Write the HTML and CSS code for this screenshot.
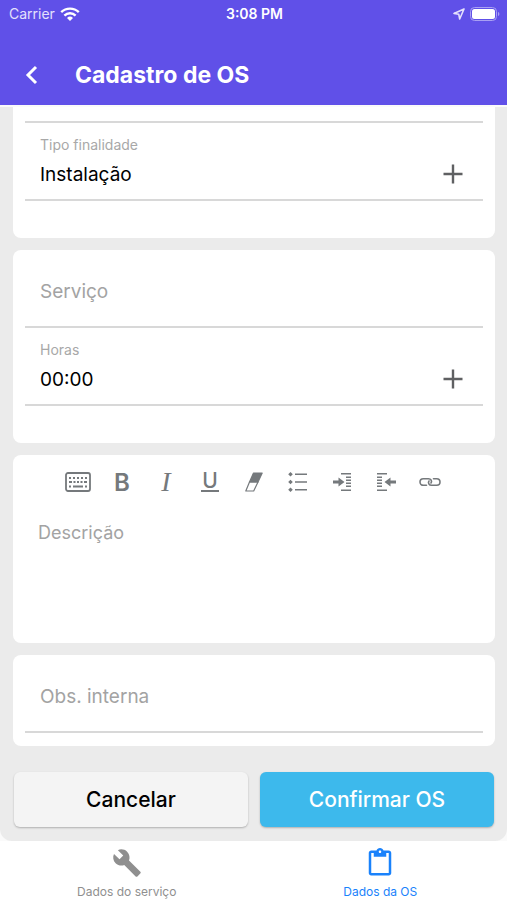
FILE: index.html
```html
<!DOCTYPE html>
<html lang="pt-BR">
<head>
  <meta charset="UTF-8" />
  <meta name="viewport" content="width=device-width, initial-scale=1" />
  <title>Cadastro de OS</title>
  <link rel="stylesheet" href="styles.css">
</head>
<body>

  <header class="header">
    <div class="status-bar">
      <div class="status-left">
        <span>Carrier</span>
        <svg width="20" height="14" viewBox="0 0 20 14" fill="none" stroke="#fff" stroke-width="2.4">
          <path d="M1.2 5.2a12.6 12.6 0 0 1 17.6 0" />
          <path d="M4.4 8.6a8 8 0 0 1 11.2 0" />
          <path d="M7 11a4.4 4.4 0 0 1 6 0l-3 3z" fill="#fff" stroke="none" />
        </svg>
      </div>
      <span class="status-time">3:08 PM</span>
      <div class="status-right">
        <svg width="12" height="12" viewBox="0 0 12 12" fill="none" stroke="#e4e0fc" stroke-width="1.6" stroke-linejoin="round">
          <path d="M11 1L1 5.4l4.8.9.9 4.7z" />
        </svg>
        <svg width="30" height="14" viewBox="0 0 30 14">
          <rect x="0.5" y="0.5" width="26" height="13" rx="4" fill="none" stroke="#a9a0f3" />
          <rect x="2" y="2" width="23" height="10" rx="2.5" fill="#fff" />
          <path d="M28 5c1.8.5 1.8 3.5 0 4z" fill="#a9a0f3" />
        </svg>
      </div>
    </div>
    <div class="title-bar">
      <button class="back-btn" type="button" aria-label="Voltar">
        <svg width="13" height="20" viewBox="0 0 13 20" fill="none" stroke="#fff" stroke-width="3">
          <path d="M11 2L3 10l8 8" />
        </svg>
      </button>
      <h1>Cadastro de OS</h1>
    </div>
  </header>

  <main class="content">
    <form class="form">
      <section class="card card-first">
        <div class="field field-cut"></div>
        <div class="field">
          <label for="tipo">Tipo finalidade</label>
          <div class="field-row">
            <input type="text" id="tipo" value="Instalação" />
            <button class="add-btn" type="button" aria-label="Selecionar finalidade">
              <svg width="20" height="20" viewBox="0 0 20 20" stroke="#5f6062" stroke-width="2.4"><path d="M10 0.5v19M0.5 10h19" /></svg>
            </button>
          </div>
        </div>
      </section>

      <section class="card">
        <div class="field field-empty">
          <input type="text" id="servico" placeholder="Serviço" aria-label="Serviço" />
        </div>
        <div class="field">
          <label for="horas">Horas</label>
          <div class="field-row">
            <input type="text" id="horas" value="00:00" />
            <button class="add-btn" type="button" aria-label="Selecionar horas">
              <svg width="20" height="20" viewBox="0 0 20 20" stroke="#5f6062" stroke-width="2.4"><path d="M10 0.5v19M0.5 10h19" /></svg>
            </button>
          </div>
        </div>
      </section>

      <section class="card card-editor">
        <div class="toolbar">
          <button type="button" aria-label="Teclado">
            <svg width="26" height="20" viewBox="0 0 26 20" fill="none" stroke="#75797c">
              <rect x="1" y="1" width="24" height="18" rx="2" stroke-width="1.8" />
              <path d="M4 6h18" stroke-width="2" stroke-dasharray="2 2" />
              <path d="M4 10h3M8.5 10h2M12 10h2M15.5 10h2M19 10h3M4 14.5h2M8 14.5h10M20 14.5h2" stroke-width="2" />
            </svg>
          </button>
          <button class="tool-bold" type="button" aria-label="Negrito">B</button>
          <button class="tool-italic" type="button" aria-label="Itálico">I</button>
          <button class="tool-underline" type="button" aria-label="Sublinhado"><span>U</span></button>
          <button type="button" aria-label="Limpar formatação">
            <svg width="18" height="20" viewBox="0 0 18 20" stroke="#75797c" stroke-width="1.2" stroke-linejoin="round">
              <path d="M8.5 1h8.7L13 10H4.5z" fill="#75797c" />
              <path d="M4.5 10H13l-4.3 9H.8z" fill="none" />
            </svg>
          </button>
          <button type="button" aria-label="Lista">
            <svg width="20" height="20" viewBox="0 0 20 20" fill="#75797c">
              <path d="M2.5 0l2.3 2.3-2.3 2.3L.2 2.3zM2.5 7.7L4.8 10l-2.3 2.3L.2 10zM2.5 15.4l2.3 2.3-2.3 2.3-2.3-2.3z" />
              <path d="M7 1.5h12v1.6H7zM7 9.2h12v1.6H7zM7 16.9h12v1.6H7z" />
            </svg>
          </button>
          <button type="button" aria-label="Aumentar recuo">
            <svg width="20" height="18" viewBox="0 0 20 18" fill="#75797c">
              <path d="M1 7.5h5.5V4.6L12.500 9l-6 4.400v-2.900H1z" />
              <path d="M9 0h10v1.500H9zM14 3.600h5V5h-5zM14 6.600h5V8h-5zM14 9.600h5V11h-5zM14 12.600h5V14h-5zM9 16.500h10V18H9z" />
            </svg>
          </button>
          <button type="button" aria-label="Diminuir recuo">
            <svg width="20" height="18" viewBox="0 0 20 18" fill="#75797c">
              <path d="M20 7.500h-5.500V4.600L8.500 9l6 4.400v-2.900H20z" />
              <path d="M1 0h10v1.500H1zM1 3.600h5V5H1zM1 6.600h5V8H1zM1 9.600h5V11H1zM1 12.600h5V14H1zM1 16.500h10V18H1z" />
            </svg>
          </button>
          <button type="button" aria-label="Link">
            <svg width="22" height="10" viewBox="0 0 22 10" fill="none" stroke="#75797c" stroke-width="1.6" stroke-linecap="round">
              <path d="M7.5 8.300H4.300a3.300 3.300 0 0 1 0-6.600h5.200c2.500 0 3.800 2.600 2.500 4.300" />
              <path d="M14.500 1.700h3.200a3.300 3.300 0 0 1 0 6.600h-5.200C10 8.300 8.700 5.700 10 4" />
            </svg>
          </button>
        </div>
        <textarea id="descricao" placeholder="Descrição" aria-label="Descrição"></textarea>
      </section>

      <section class="card card-last">
        <div class="field field-empty">
          <input type="text" id="obs" placeholder="Obs. interna" aria-label="Obs. interna" />
        </div>
      </section>

      <div class="actions">
        <button class="cancel-btn" type="button">Cancelar</button>
        <button class="confirm-btn" type="button">Confirmar OS</button>
      </div>
    </form>
  </main>

  <nav class="tabs">
    <a class="tab" href="#servico">
      <svg width="30" height="30" viewBox="0 0 24 24" fill="currentColor">
        <path d="M22.7 19l-9.1-9.1c.9-2.3.4-5-1.5-6.9-2-2-5-2.4-7.4-1.3L9 6 6 9 1.6 4.7C.4 7.1.9 10.1 2.9 12.1c1.9 1.9 4.6 2.4 6.9 1.5l9.1 9.1c.4.4 1 .4 1.4 0l2.3-2.3c.5-.4.5-1.1.1-1.4z" />
      </svg>
      <span>Dados do serviço</span>
    </a>
    <a class="tab active" href="#tipo">
      <svg width="30" height="30" viewBox="0 0 24 24" fill="currentColor">
        <path d="M19 2h-4.18C14.4.84 13.3 0 12 0c-1.3 0-2.4.84-2.82 2H5c-1.1 0-2 .9-2 2v16c0 1.1.9 2 2 2h14c1.1 0 2-.9 2-2V4c0-1.1-.9-2-2-2zm-7 0c.55 0 1 .45 1 1s-.45 1-1 1-1-.45-1-1 .45-1 1-1zm7 18H5V4h2v3h10V4h2v16z" />
      </svg>
      <span>Dados da OS</span>
    </a>
  </nav>

</body>
</html>
```
FILE: styles.css
```css
* {
  box-sizing: border-box;
}
body {
  margin: 0;
  min-height: 100vh;
  display: flex;
  flex-direction: column;
  font-family: Inter, "Liberation Sans", sans-serif;
  background: #fafafa;
}
button, input, textarea {
  font-family: inherit;
  margin: 0;
  padding: 0;
  border: none;
  background: none;
}
button {
  cursor: pointer;
}
svg {
  display: block;
}

.header {
  background: #6050e8;
  color: white;
}
.status-bar {
  display: grid;
  grid-template-columns: 1fr auto 1fr;
  align-items: center;
  height: 27px;
  padding: 0 7px 0 9px;
  font-size: 14px;
}
.status-left, .status-right {
  display: flex;
  align-items: center;
  gap: 5px;
}
.status-left {
  color: #e4e0fc;
}
.status-right {
  justify-content: flex-end;
}
.status-time {
  font-weight: 600;
}
.title-bar {
  display: flex;
  align-items: center;
  height: 78px;
  padding: 17px 12px 0;
}
.back-btn {
  display: flex;
  align-items: center;
  justify-content: center;
  width: 39px;
  height: 44px;
  margin-right: 24px;
}
h1 {
  margin: 0;
  font-size: 23px;
  font-weight: 700;
}

.content {
  flex: 1;
  background: #ebebeb;
  border-top: 2px solid #fafafa;
  border-radius: 0 0 12px 12px;
}
.form {
  display: flex;
  flex-direction: column;
  gap: 12px;
  padding: 0 12px 14px 13px;
}
.card {
  padding: 0 12px 37px;
  background: white;
  border-radius: 8px;
}
.card-first {
  border-radius: 0 0 8px 8px;
}
.card-last {
  padding-bottom: 13px;
}
.field {
  height: 78px;
  padding: 13px 0 0 15px;
  border-bottom: 2px solid #d8d8d8;
}
.field-cut {
  height: 16px;
}
.field-empty {
  padding-top: 21px;
}
.field label {
  display: block;
  font-size: 14px;
  line-height: 18px;
  color: #a8a8a8;
}
.field-row {
  display: flex;
}
.field input {
  flex: 1;
  width: 100%;
  min-width: 0;
  height: 40px;
  font-size: 19px;
  color: black;
}
::placeholder {
  color: #a3a3a3;
  opacity: 1;
}
.add-btn {
  display: flex;
  align-items: center;
  justify-content: center;
  width: 60px;
  height: 40px;
}

.card-editor {
  padding: 5px 0 0;
}
.toolbar {
  display: flex;
  justify-content: center;
}
.toolbar button {
  display: flex;
  align-items: center;
  justify-content: center;
  width: 44px;
  height: 44px;
  color: #75797c;
}
.toolbar .tool-bold {
  font-size: 24px;
  font-weight: 600;
}
.toolbar .tool-italic {
  font-family: "Liberation Serif", serif;
  font-size: 28px;
  font-style: italic;
}
.toolbar .tool-underline {
  font-size: 21px;
  font-weight: 500;
}
.tool-underline span {
  padding: 0 1px;
  line-height: 18px;
  border-bottom: 2px solid #75797c;
}
textarea {
  display: block;
  width: 100%;
  height: 139px;
  padding: 17px 25px;
  font-size: 18px;
  line-height: 24px;
  resize: none;
}

.actions {
  display: grid;
  grid-template-columns: 1fr 1fr;
  gap: 12px;
  padding: 14px 1px 0;
}
.actions button {
  height: 55px;
  font-size: 21px;
  font-weight: 500;
  border-radius: 6px;
  box-shadow: 0 1px 2px rgba(0, 0, 0, 0.25);
}
.cancel-btn {
  background: #f4f4f4;
  color: black;
}
.confirm-btn {
  background: #3db9ec;
  color: white;
}

.tabs {
  display: grid;
  grid-template-columns: 1fr 1fr;
  height: 59px;
  background: white;
}
.tab {
  display: flex;
  flex-direction: column;
  align-items: center;
  gap: 6px;
  padding-top: 7px;
  font-size: 12px;
  line-height: 16px;
  color: #8f8f8f;
  text-decoration: none;
}
.tab.active {
  color: #1a82fb;
}
```
